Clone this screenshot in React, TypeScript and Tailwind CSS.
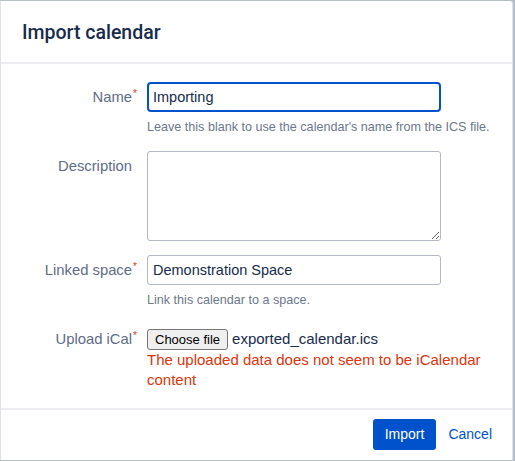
import React from "react";

const font = { fontFamily: '"Liberation Sans", Arial, sans-serif' };

function Label({ text, required, pt = "pt-[5px]" }: { text: string; required?: boolean; pt?: string }) {
  return (
    <div className={`w-[131px] shrink-0 text-right text-[14.8px] leading-[20px] text-[#5e6c84] relative ${pt}`}>
      <span className="relative">
        {text}
        {required && (
          <span className="absolute left-full ml-[1px] -top-[5px] text-[10px] text-[#de350b]">*</span>
        )}
      </span>
    </div>
  );
}

export default function App() {
  return (
    <div className="w-[515px] h-[461px] bg-[#b8bec8] overflow-hidden" style={font}>
      <div className="mt-[1px] w-[513px] h-[459px] bg-white border-l border-r border-[#dfe1e6] flex flex-col rounded-tr-[3px]">
        {/* Header */}
        <div className="h-[61px] shrink-0 flex items-center px-[21px] pt-[3px]">
          <h2
            className="text-[19.5px] font-medium text-[#172b4d] leading-[24px]"
            style={{ fontFamily: 'Roboto, "Liberation Sans", Arial, sans-serif' }}
          >
            Import calendar
          </h2>
        </div>
        <div className="h-[2px] bg-[#ebecf0] shrink-0" />

        {/* Body */}
        <div className="flex-1 pt-[18px] pr-[20px]">
          {/* Name */}
          <div className="flex">
            <Label text="Name" required />
            <div className="ml-[15px] flex-1">
              <input
                readOnly
                value="Importing"
                className="w-[294px] h-[30px] border-2 border-[#0052cc] rounded-[4px] px-[4px] text-[14.5px] text-[#172b4d] outline-none bg-white"
                style={font}
              />
              <div className="mt-[7px] text-[12.6px] leading-[16px] text-[#6b778c] whitespace-nowrap">
                Leave this blank to use the calendar's name from the ICS file.
              </div>
            </div>
          </div>

          {/* Description */}
          <div className="flex mt-[16px]">
            <Label text="Description" />
            <div className="ml-[15px] flex-1">
              <textarea
                readOnly
                className="block w-[294px] h-[90px] border border-[#b3bac5] rounded-[3px] px-[5px] text-[14px] text-[#172b4d] outline-none bg-white"
                style={font}
              />
            </div>
          </div>

          {/* Linked space */}
          <div className="flex mt-[14px]">
            <Label text="Linked space" required />
            <div className="ml-[15px] flex-1">
              <input
                readOnly
                value="Demonstration Space"
                className="w-[294px] h-[30px] border border-[#b3bac5] rounded-[3px] px-[5px] text-[14.5px] text-[#172b4d] outline-none bg-white"
                style={font}
              />
              <div className="mt-[7px] text-[12.6px] leading-[16px] text-[#6b778c]">
                Link this calendar to a space.
              </div>
            </div>
          </div>

          {/* Upload iCal */}
          <div className="flex mt-[21px]">
            <Label text="Upload iCal" required pt="pt-0" />
            <div className="ml-[15px] flex-1">
              <div className="flex items-center h-[21px]">
                <button
                  className="h-[21px] px-[7px] bg-[#efefef] border border-[#767676] rounded-[3px] text-[13px] text-black leading-[19px]"
                  style={font}
                >
                  Choose file
                </button>
                <span className="ml-[4px] text-[15px] text-[#172b4d]">exported_calendar.ics</span>
              </div>
              <div className="text-[15px] leading-[20px] text-[#de350b]">
                The uploaded data does not seem to be iCalendar content
              </div>
            </div>
          </div>
        </div>

        {/* Footer */}
        <div className="h-[2px] bg-[#ebecf0] shrink-0" />
        <div className="h-[50px] shrink-0 flex items-center justify-end pr-[20px] pb-[1px]">
          <button
            className="h-[31px] px-[12px] bg-[#0052cc] text-white text-[14px] rounded-[3px]"
            style={font}
          >
            Import
          </button>
          <button className="ml-[12px] text-[14px] text-[#0052cc]" style={font}>
            Cancel
          </button>
        </div>
      </div>
    </div>
  );
}
